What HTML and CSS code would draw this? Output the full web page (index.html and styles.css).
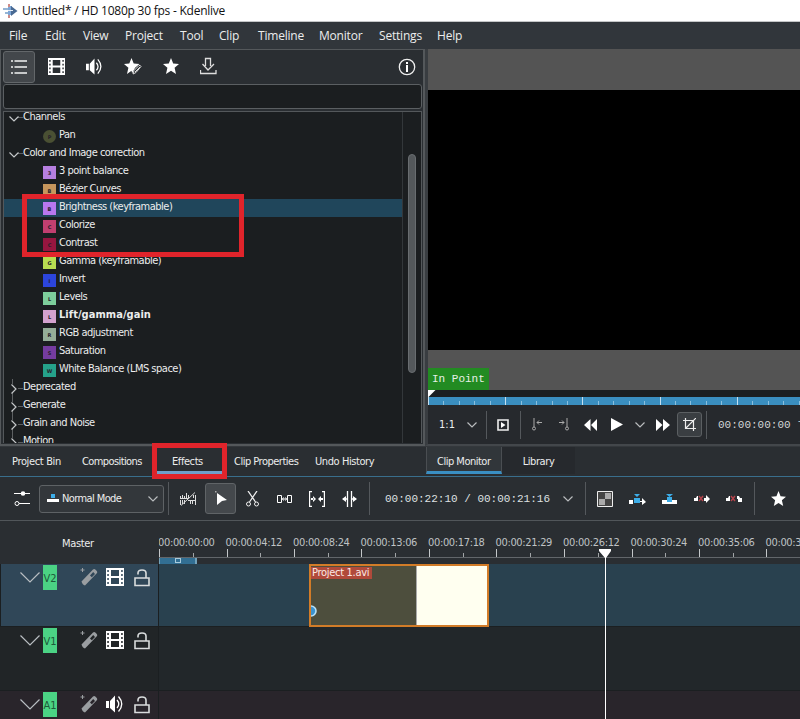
FILE: index.html
```html
<!DOCTYPE html>
<html lang="en">
<head>
<meta charset="utf-8">
<title>Untitled* / HD 1080p 30 fps - Kdenlive</title>
<link rel="stylesheet" href="styles.css">
</head>
<body>
<svg class="defs" width="0" height="0">
  <symbol id="film" viewBox="0 0 18 18"><path fill="currentColor" fill-rule="evenodd" d="M0 0H18V18H0zM5 2V8H13V2zM5 10V16H13V10zM1.300 2v2h1.500V2zM1.300 6v2h1.500V6zM1.300 10v2h1.500v-2zM1.300 14v2h1.500v-2zM15.200 2v2h1.500V2zM15.200 6v2h1.500V6zM15.200 10v2h1.500v-2zM15.200 14v2h1.500v-2z"/></symbol>
  <symbol id="sound" viewBox="0 0 18 18"><path fill="currentColor" d="M0 6h3v7H0zM4 6l5-5.500v17L4 13z"/><path fill="none" stroke="currentColor" stroke-width="1.300" d="M11 5q3.500 4 0 8M12.500 1.500q6.500 7.500 0 15"/></symbol>
  <symbol id="star" viewBox="0 0 16 16"><path fill="currentColor" d="M8 0l2.200 5.500 5.800.5-4.400 3.800L13 16l-5-3.200L3 16l1.400-6.200L0 6l5.800-.5z"/></symbol>
  <symbol id="chev" viewBox="0 0 10 6"><path fill="none" stroke="currentColor" stroke-width="1.200" d="M.5.5L5 5 9.500.5"/></symbol>
  <symbol id="right" viewBox="0 0 6 10"><path fill="none" stroke="currentColor" stroke-width="1.200" d="M.5.5L5 5 .5 9.500"/></symbol>
  <symbol id="wand" viewBox="0 0 18 18"><path fill="currentColor" fill-rule="evenodd" d="M1.500 13.500L13 1.500q1.200-1 2.300 0l1.500 1.500q1 1.200 0 2.300L5 17.500q-2.500-.5-3.500-4zM10 7.500l1.800 1.800 3.200-3.400-1.800-1.800z"/><path stroke="currentColor" d="M2.500 0v4M.5 2h4"/></symbol>
  <symbol id="lock" viewBox="0 0 16 18"><path fill="none" stroke="currentColor" stroke-width="1.600" d="M1 9h14v7.500H1zM4 5.500V4q0-3 4-3t4 3v5"/></symbol>
</svg>

<header class="titlebar">
  <svg width="15" height="14" viewBox="0 0 15 14"><path fill="#96b5d5" d="M0 4h5v2H0zM2 8h4v2H2z"/><path fill="#7da6d6" d="M5 2h4v9H5z"/><path fill="#496a93" d="M8 2l6.500 5L8 12z"/><path fill="#ce8b87" d="M5 0h2v3H5zM5 11h2v3H5z"/><path fill="#e6edf5" d="M5 6h5v1H5z"/></svg>
  <span>Untitled* / HD 1080p 30 fps - Kdenlive</span>
</header>
<nav class="menubar"><span>File</span><span>Edit</span><span>View</span><span>Project</span><span>Tool</span><span>Clip</span><span>Timeline</span><span>Monitor</span><span>Settings</span><span>Help</span></nav>

<main class="upper">
  <section class="effects">
    <div class="fxbar">
      <span class="fxbtn on"><svg width="18" height="16" viewBox="0 0 18 16"><path stroke="#f4f5f5" stroke-width="1.600" d="M4.500 2H17M4.500 8H17M4.500 14H17M1 2h2M1 8h2M1 14h2"/></svg></span>
      <span class="fxbtn"><svg width="17" height="17"><use href="#film"/></svg></span>
      <span class="fxbtn"><svg width="17" height="17"><use href="#sound"/></svg></span>
      <span class="fxbtn"><svg width="18" height="17" viewBox="0 0 18 17"><path fill="#fff" d="M7.500 0l2.200 5.500 5.800.5-4.400 3.800-3 5.500-.6-2.500L3 16l1.400-6.200L0 6l5.300-.5z"/><path fill="#2a2e32" stroke="#ddd" d="M9 16l1-3.500 5-5q1.500-.5 2 1l-5 6z"/><path stroke="#ddd" d="M11 14l5-5"/></svg></span>
      <span class="fxbtn"><svg width="16" height="16"><use href="#star"/></svg></span>
      <span class="fxbtn"><svg width="17" height="18" viewBox="0 0 17 18"><path fill="none" stroke="#ddd" stroke-width="1.300" d="M5.500 9V1.500h5V9M2.500 7L8 13l6-6M.5 13v3.500H16V13"/></svg></span>
      <span class="info"><svg width="18" height="18" viewBox="0 0 18 18"><circle cx="9" cy="9" r="7.700" fill="none" stroke="#eee" stroke-width="1.300"/><path fill="#fff" d="M8 4h2v2H8zM8 7h2v7H8z"/></svg></span>
    </div>
    <div class="search"></div>
    <div class="tree">
      <ul class="rows">
        <li class="group open"><svg width="10" height="6"><use href="#chev"/></svg><span>Channels</span></li>
        <li><i class="pan">P</i><span>Pan</span></li>
        <li class="group open"><svg width="10" height="6"><use href="#chev"/></svg><span>Color and Image correction</span></li>
        <li><i class="c1">3</i><span>3 point balance</span></li>
        <li><i class="c2">B</i><span>Bézier Curves</span></li>
        <li class="selected"><i class="c3">B</i><span>Brightness (keyframable)</span></li>
        <li><i class="c4">C</i><span>Colorize</span></li>
        <li><i class="c5">C</i><span>Contrast</span></li>
        <li><i class="c6">G</i><span>Gamma (keyframable)</span></li>
        <li><i class="c7">I</i><span>Invert</span></li>
        <li><i class="c8">L</i><span>Levels</span></li>
        <li><i class="c9">L</i><span class="strong">Lift/gamma/gain</span></li>
        <li><i class="c10">R</i><span>RGB adjustment</span></li>
        <li><i class="c11">S</i><span>Saturation</span></li>
        <li><i class="c12">W</i><span>White Balance (LMS space)</span></li>
        <li class="group"><svg width="6" height="10"><use href="#right"/></svg><span>Deprecated</span></li>
        <li class="group"><svg width="6" height="10"><use href="#right"/></svg><span>Generate</span></li>
        <li class="group"><svg width="6" height="10"><use href="#right"/></svg><span>Grain and Noise</span></li>
        <li class="group"><svg width="6" height="10"><use href="#right"/></svg><span>Motion</span></li>
      </ul>
      <div class="scroll"><div class="thumb"></div></div>
    </div>
  </section>

  <section class="monitor">
    <div class="screen"><div class="video"></div><div class="below"><span class="inpoint">In Point</span></div></div>
    <div class="seek"><svg width="8" height="8"><path fill="#fff" d="M0 0h7.500L0 7.500z"/></svg></div>
    <div class="mticks"></div>
    <div class="controls">
      <span class="ratio">1:1</span>
      <svg class="soft" width="10" height="6"><use href="#chev"/></svg>
      <b class="sep s1"></b>
      <svg class="k-box" width="12" height="12" viewBox="0 0 12 12"><path fill="none" stroke="#eee" stroke-width="1.600" d="M1 1h10v10H1z"/><path fill="#fff" d="M4 3l4.500 3L4 9z"/></svg>
      <b class="sep s2"></b>
      <svg class="k-in" width="11" height="13" viewBox="0 0 11 13"><path fill="none" stroke="#aaa" d="M2 0v9M10 4.500H5M7 2.500l-2 2 2 2"/><circle cx="2" cy="10.500" r="1.500" fill="none" stroke="#aaa"/></svg>
      <svg class="k-out" width="11" height="13" viewBox="0 0 11 13"><path fill="none" stroke="#aaa" d="M9 0v9M1 4.500h5M4 2.500l2 2-2 2"/><circle cx="9" cy="10.500" r="1.500" fill="none" stroke="#aaa"/></svg>
      <svg class="k-rew" width="13" height="12"><path fill="#fff" d="M6.500 0v12L0 6zM13 0v12L7 6z"/></svg>
      <svg class="k-play" width="12" height="13"><path fill="#fff" d="M0 0l12 6.500L0 13z"/></svg>
      <svg class="k-chev soft" width="10" height="6"><use href="#chev"/></svg>
      <svg class="k-fwd" width="14" height="12"><path fill="#fff" d="M0 0l6.500 6L0 12zM7 0l7 6-7 6z"/></svg>
      <span class="crop"><svg width="13" height="13" viewBox="0 0 13 13"><path fill="none" stroke="#eee" stroke-width="1.200" d="M2.500 0v10.500H13M0 2.500h10.500V13M3 10L13 0"/></svg></span>
      <b class="sep s3"></b>
      <span class="mtime">00:00:00:00</span><span class="mtime more">T</span>
    </div>
  </section>
</main>

<div class="tabs">
  <span class="t-bin">Project Bin</span><span class="t-comp">Compositions</span><span class="t-fx">Effects</span><span class="t-prop">Clip Properties</span><span class="t-undo">Undo History</span>
  <span class="t-mon">Clip Monitor</span><span class="t-lib">Library</span>
</div>

<div class="toolbar">
  <svg class="sliders" width="16" height="15" viewBox="0 0 16 15"><path stroke="#fff" stroke-width="1.200" d="M0 2.500h16M5 12.500h11"/><circle cx="9" cy="2.500" r="2.300" fill="#fff"/><circle cx="3" cy="12.500" r="2" fill="none" stroke="#fff"/></svg>
  <div class="mode"><svg width="12" height="9" viewBox="0 0 12 9"><path fill="#3daee9" d="M4 0h4v4H4z"/><path fill="#fff" d="M0 5h12v3H0z"/></svg><span>Normal Mode</span><svg class="soft" width="10" height="6"><use href="#chev"/></svg></div>
  <b class="sep tall"></b>
  <svg class="i-mix" width="16" height="14" viewBox="0 0 16 14"><path stroke="#ddd" fill="none" d="M.5 4v2M2.500 3v3M4.500 4v2M6.500 1v5M8.500 3v3M.5 8v5M2.500 8v4M4.500 8v4M10.500 8v4M12.500 8v4M15.500 3v10M13.500 3v3M0 6.500h8M8 8.500h8M1 13.500L15 .5"/></svg>
  <span class="pick"><svg width="12" height="15" viewBox="0 0 12 15"><path fill="#fff" d="M2 2l10 7-5 1-5 4z"/><path fill="#aaa" d="M0 0h1.500v1.500H0z"/></svg></span>
  <svg class="i-cut" width="13" height="16" viewBox="0 0 13 16"><path fill="none" stroke="#eee" stroke-width="1.300" d="M2 0l7.500 11M11 0L3.500 11"/><circle cx="2.500" cy="13" r="2" fill="none" stroke="#eee"/><circle cx="10.500" cy="13" r="2" fill="none" stroke="#eee"/></svg>
  <svg class="i-space" width="15" height="8" viewBox="0 0 15 8"><path fill="none" stroke="#fff" d="M.5.500h4v7h-4zM10.500.500h4v7h-4zM5.500 4h4M6.500 2.500L5.500 4l1 1.500M8.500 2.500l1 1.500-1 1.500"/></svg>
  <svg class="i-fit" width="16" height="16" viewBox="0 0 16 16"><path fill="none" stroke="#fff" stroke-width="1.200" d="M3 .6H.6v14.800H3M13 .6h2.400v14.800H13M3 8h3M10 8h3"/><path fill="#fff" d="M7 8L4 5v6zM9 8l3-3v6zM2 7h3v2H2zM11 7h3v2h-3z"/></svg>
  <svg class="i-slip" width="15" height="16" viewBox="0 0 15 16"><path fill="none" stroke="#fff" stroke-width="1.300" d="M5.500 0v16M9.500 0v16M1 8h4M10 8h4"/><path fill="#fff" d="M0 8l4-3v6zM15 8l-4-3v6z"/></svg>
  <b class="sep tall"></b>
  <span class="tcode">00:00:22:10 / 00:00:21:16</span>
  <svg class="soft i-tc" width="10" height="6"><use href="#chev"/></svg>
  <b class="sep tall"></b>
  <svg class="i-comp" width="16" height="16" viewBox="0 0 16 16"><path fill="#444" stroke="#eee" d="M.5.500h15v15H.5z"/><path fill="#aaa" d="M8 2h6v6H8zM2 8h6v6H2z"/></svg>
  <svg class="i-a" width="17" height="12" viewBox="0 0 17 12"><path fill="#fff" d="M0 7h4v4H0zM11 8h2V5l4 4-4 3V9h-2z"/><path fill="#3daee9" d="M5 5h6v5H5zM5 1l3 3 3-3z"/></svg>
  <svg class="i-b" width="15" height="12" viewBox="0 0 15 12"><path fill="#fff" d="M0 7h15v4H0z"/><path fill="#3daee9" d="M5 4h5v5H5zM4 1h7L7.500 4z"/></svg>
  <svg class="i-c" width="16" height="8" viewBox="0 0 16 8"><path fill="#fff" d="M0 3h2l1-2h1v5H0zM10 3h2V0l4 4-4 4V6h-2z"/><path stroke="#b5434b" stroke-width="1.400" d="M5 1l4 5M9 1L5 6"/></svg>
  <svg class="i-d" width="16" height="8" viewBox="0 0 16 8"><path fill="#fff" d="M0 3h2l1-2h1v5H0zM11 1h2l1 2h2v4h-4V4h-1z"/><path stroke="#b5434b" stroke-width="1.400" d="M5 1l4 5M9 1L5 6"/></svg>
  <b class="sep tall"></b>
  <svg class="i-e" width="15" height="15"><use href="#star"/></svg>
</div>

<section class="timeline">
  <div class="rulerrow">
    <div class="master">Master</div>
    <div class="ruler">
      <div class="labels"><span>00:00:00:00</span><span>00:00:04:12</span><span>00:00:08:24</span><span>00:00:13:06</span><span>00:00:17:18</span><span>00:00:21:29</span><span>00:00:26:12</span><span>00:00:30:24</span><span>00:00:35:06</span><span>00:00:39:18</span></div>
      <div class="ticks"></div>
      <div class="zonebar"><div class="zone"><i></i></div></div>
    </div>
  </div>
  <div class="track v2">
    <div class="head"><svg class="fold" width="20" height="11" viewBox="0 0 20 11"><path fill="none" stroke="currentColor" stroke-width="1.200" d="M.5.5L10 10 19.500.5"/></svg><span class="tag">V2</span><svg class="wand" width="18" height="18"><use href="#wand"/></svg><svg class="kind" width="18" height="18"><use href="#film"/></svg><svg class="lock" width="16" height="18"><use href="#lock"/></svg></div>
    <div class="lane"><div class="clip"><span class="name">Project 1.avi</span><div class="bright"></div><svg class="key" width="7" height="12"><circle cx="0" cy="6" r="5" fill="#3b93cf" stroke="#b9e0f6" stroke-width="1.600"/></svg></div></div>
  </div>
  <div class="track v1">
    <div class="head"><svg class="fold" width="20" height="11" viewBox="0 0 20 11"><path fill="none" stroke="currentColor" stroke-width="1.200" d="M.5.5L10 10 19.500.5"/></svg><span class="tag">V1</span><svg class="wand" width="18" height="18"><use href="#wand"/></svg><svg class="kind" width="18" height="18"><use href="#film"/></svg><svg class="lock" width="16" height="18"><use href="#lock"/></svg></div>
    <div class="lane"></div>
  </div>
  <div class="track a1">
    <div class="head"><svg class="fold" width="20" height="11" viewBox="0 0 20 11"><path fill="none" stroke="currentColor" stroke-width="1.200" d="M.5.5L10 10 19.500.5"/></svg><span class="tag">A1</span><svg class="wand" width="18" height="18"><use href="#wand"/></svg><svg class="kind" width="18" height="18"><use href="#sound"/></svg><svg class="lock" width="16" height="18"><use href="#lock"/></svg></div>
    <div class="lane"></div>
  </div>
  <svg class="playhead" width="14" height="172"><path fill="#fff" d="M1 0h12v2L8 9v163H7V9L1 2z"/></svg>
</section>
<div class="mark mark-list"></div>
<div class="mark mark-tab"></div>
</body>
</html>
```
FILE: styles.css
```css
* { box-sizing: border-box; }
body {
  margin: 0; width: 800px; height: 719px; overflow: hidden; position: relative;
  display: flex; flex-direction: column;
  background: #2a2e32; color: #eceded;
  font: 11px/16px "DejaVu Sans Condensed", "DejaVu Sans", sans-serif;
  font-stretch: condensed; letter-spacing: -0.42px;
}
svg { display: block; flex: none; }
.defs { position: absolute; }
span, b, i { flex: none; white-space: nowrap; }
i { font-style: normal; }
.soft { color: #b9bcbe; }
.sep { width: 1px; background: #54585c; }

.titlebar {
  height: 22px; flex: none; display: flex; align-items: center; gap: 4px; padding-left: 3px;
  background: #fff; color: #111; border-bottom: 1px solid #c4c6c7;
  font: 12px/20px "Open Sans", sans-serif; letter-spacing: -0.02px; word-spacing: -0.5px;
  letter-spacing: -0.65px; letter-spacing: -0.6px;
}
.titlebar { letter-spacing: -0.28px; word-spacing: 0; }
.titlebar span { letter-spacing: -0.02em; margin-top: 1px; }
.menubar {
  height: 27px; flex: none; display: grid; padding-left: 9px;
  grid-template-columns: 36px 38px 42px 55px 39px 39px 61px 60px 58px 60px;
  background: #31363b; font: 12px/27px "Open Sans", sans-serif; letter-spacing: -0.2px;
}

.upper { height: 397px; flex: none; display: flex; }
.effects {
  width: 425px; border: solid #54585b; border-width: 1px 2px 2px 1px; padding: 0 1px 0 2px;
  display: flex; flex-direction: column;
}
.fxbar { height: 34px; display: flex; gap: 6px; align-items: center; color: #fff; flex: none; }
.fxbtn { width: 32px; height: 32px; display: grid; place-items: center; padding: 0 1px 2px 0; }
.fxbtn.on { background: #43474b; border: 1px solid #63676a; border-radius: 3px; padding: 0; }
.info { margin-left: 167px; padding-bottom: 1px; }
.search { height: 25px; flex: none; background: #1b1e20; border: 1px solid #5b5f62; border-radius: 3px; }
.tree {
  flex: 1; min-height: 0; overflow: hidden; display: flex; margin: 2px 0 1px;
  background: #1b1e20; border: 1px solid #54585b; border-bottom: 0;
}
.rows { width: 398px; margin: -3px 0 0; padding: 0; list-style: none; flex: none; }
.rows li { height: 18px; padding-left: 39px; display: flex; align-items: center; letter-spacing: -0.5px; }
.rows li > span { line-height: 14px; padding-bottom: 2px; }
.rows i {
  width: 13px; height: 13px; margin-right: 3px; color: #25202a;
  font: bold 5px/14px "DejaVu Sans", sans-serif; text-align: center; letter-spacing: 0;
}
.rows .strong { font-weight: bold; letter-spacing: 0.05px; }
.rows .group {
  padding-left: 5px;
  background: linear-gradient(#5d6062, #5d6062) 14px 9px / 5px 1px no-repeat, linear-gradient(#5d6062, #5d6062) 8px 0 / 1px 5px no-repeat, linear-gradient(#5d6062, #5d6062) 8px 14px / 1px 4px no-repeat;
}
.rows .open { background: linear-gradient(#5d6062, #5d6062) 14px 8px / 5px 1px no-repeat; }
.group svg { color: #c5c8ca; margin: 2px 6px 0 2px; width: 6px; }
.group.open svg { width: 10px; margin: 2px 4px 0 0; }
.rows .selected { background: #20465b; }
.rows .pan { background: #4a5033; border-radius: 50%; }
.c1 { background: #b67fe0; } .c2 { background: #c6965c; } .c3 { background: #b877ee; }
.c4 { background: #c13f70; } .c5 { background: #961640; } .c6 { background: #b8dd51; }
.c7 { background: #2c45dc; } .c8 { background: #7dce9b; } .c9 { background: #d3a2cf; }
.c10 { background: #95ae99; } .c11 { background: #753ca0; } .c12 { background: #25a28a; }
.scroll { flex: 1; border-left: 1px solid #33373a; padding: 42px 0 0 5px; }
.thumb { width: 8px; height: 219px; border-radius: 4px; background: #54585b; border: 1px solid #696d70; }

.monitor {
  width: 375px; flex: none; display: flex; flex-direction: column;
  border-left: 3px solid #393d41; border-bottom: 2px solid #43474b;
}
.screen { height: 341px; background: #545454; padding-top: 41px; flex: none; }
.video { height: 260px; background: #000; }
.below { height: 40px; padding-top: 18px; }
.inpoint {
  display: block; width: 61px; height: 22px; padding-left: 4px; background: #228b22; color: #e6f0e6;
  font: 11px/23px "Liberation Mono", monospace; letter-spacing: 0;
}
.seek { height: 7px; flex: none; background: #1b1e20; }
.mticks {
  height: 8px; flex: none;
  background:
    repeating-linear-gradient(90deg, #c5dfef 0 1px, transparent 1px 77.2px),
    repeating-linear-gradient(90deg, #8bbfdd 0 1px, transparent 1px 15.44px) 0 4px / 100% 4px no-repeat,
    #3a8ebf;
}
.controls { height: 39px; display: flex; align-items: center; padding-left: 11px; background: #26292d; }
.ratio { width: 19px; margin-right: 9px; letter-spacing: 0; }
.controls .sep { height: 28px; }
.s1 { margin-left: 9px; } .k-box { margin-left: 10px; } .s2 { margin-left: 11px; }
.k-in { margin-left: 11px; } .k-out { margin-left: 15px; } .k-rew { margin-left: 15px; }
.k-play { margin-left: 14px; } .k-chev { margin-left: 12px; } .k-fwd { margin-left: 11px; }
.crop { width: 25px; height: 25px; margin-left: 7px; display: grid; place-items: center; background: #3a3e42; border: 1px solid #5b5f62; border-radius: 3px; }
.s3 { margin-left: 4px; }
.mtime { margin-left: 11px; width: 73px; font: 11px/18px "Liberation Mono", monospace; letter-spacing: 0; color: #d3d5d6; }
.more { width: auto; margin-left: 7px; }

.tabs {
  height: 31px; flex: none; display: flex; border-bottom: 1px solid #396e8c; padding-bottom: 2px;
  line-height: 30px; border-top: 1px solid #34383c;
}
.t-bin { width: 70px; padding-left: 12px; letter-spacing: -0.35px; }
.t-comp { width: 86px; padding-left: 12px; letter-spacing: -0.6px; }
.t-fx { width: 66px; padding-left: 16px; border-bottom: 3px solid #6f9fcc; }
.t-prop { width: 93px; padding-left: 12px; letter-spacing: -0.5px; }
.t-undo { width: 111px; }
.t-mon { width: 76px; padding-left: 10px; letter-spacing: -0.5px; background: #31363a; border: solid #4a4e52; border-width: 0 1px 0 1px; border-bottom: 3px solid #3a8fc3; }
.t-lib { width: 73px; text-align: center; background: #26292d; }

.toolbar { height: 44px; flex: none; display: flex; align-items: center; padding-left: 14px; border-bottom: 1px solid #51565a; }
.mode { width: 125px; height: 28px; margin: 0 5px 0 9px; padding: 0 5px 0 7px; display: flex; align-items: center; gap: 3px; border: 1px solid #5e6265; border-radius: 3px; background: #33373b; letter-spacing: -0.6px; }
.mode .soft { margin-left: auto; }
.toolbar .tall { height: 33px; }
.toolbar .mode + .tall { margin-left: -1px; }
.i-mix { margin-left: 11px; }
.pick { width: 31px; height: 31px; margin-left: 9px; display: grid; place-items: center; background: #44484c; border: 1px solid #606467; border-radius: 3px; }
.i-cut { margin-left: 10px; } .i-space { margin-left: 18px; } .i-fit { margin-left: 17px; }
.i-slip { margin: 0 12px 0 17px; }
.tcode { width: 167px; margin-left: 15px; font: 11px/16px "Liberation Mono", monospace; letter-spacing: 0; color: #dfe1e2; }
.i-tc { margin: 0 12px 0 11px; }
.i-comp { margin-left: 11px; } .i-a { margin-left: 16px; } .i-b { margin-left: 16px; }
.i-c { margin-left: 17px; } .i-d { margin: 0 12px 0 16px; } .i-e { margin-left: 16px; color: #fff; }

.timeline { flex: 1; position: relative; display: flex; flex-direction: column; background: #1b1f21; }
.rulerrow { height: 43px; flex: none; display: flex; background: #2a2e32; }
.master { width: 159px; flex: none; padding-left: 62px; line-height: 45px; letter-spacing: -0.35px; }
.ruler { flex: 1; overflow: hidden; padding-top: 14px; }
.labels { height: 14px; display: grid; grid-template-columns: repeat(10, 67.5px); margin-left: -1px; color: #bfc2c4; line-height: 16px; letter-spacing: -0.35px; }
.ticks {
  height: 8px;
  background:
    repeating-linear-gradient(90deg, #c4c7c9 0 1px, transparent 1px 67.5px),
    repeating-linear-gradient(90deg, #a2a5a7 0 1px, transparent 1px 33.75px) 0 4px / 100% 4px no-repeat;
}
.zonebar { height: 7px; border-top: 1px solid #62666a; }
.zone { width: 38px; height: 6px; background: #326f93; border: solid #73a2ba; border-width: 0 2px 0 1px; display: flex; justify-content: center; }
.zone i { width: 6px; height: 5px; border: 1px solid #a9cbdc; }
.track { height: 63px; flex: none; display: flex; padding-bottom: 1px; position: relative; }
.head { width: 158px; margin-right: 1px; flex: none; display: flex; align-items: flex-start; padding: 1px 0 0 20px; background: #212527; color: #fff; }
.lane { flex: 1; background: #22272a; }
.v2 .head { background: #304758; margin-left: 1px; width: 157px; padding-left: 19px; }
.v2 .lane { background: #29414f; }
.a1 .head, .a1 .lane { background: #29252b; }
.v1 { height: 64px; }
.fold { margin-top: 7px; color: #b9bec2; }
.tag { width: 14px; height: 25px; margin-left: 3px; background: #4bd384; color: #1d5b3a; text-align: center; line-height: 27px; letter-spacing: 0; }
.wand { margin: 3px 0 0 23px; color: #9a9ea1; }
.kind { margin: 3px 0 0 8px; }
.lock { margin: 4px 0 0 10px; color: #d9dcdd; }
.clip { width: 180px; height: 63px; margin-left: 150px; position: relative; border: 2px solid #d27c28; background: #4d4e3d; display: flex; justify-content: space-between; align-items: flex-start; }
.name { background: #b04a3b; color: #fce9e4; line-height: 12px; width: 61px; padding-left: 1px; margin-top: 1px; letter-spacing: -0.3px; }
.bright { width: 71px; height: 59px; background: #fffff0; border-left: 1px solid #aaa; }
.key { position: absolute; left: 0; top: 39px; }
.playhead { position: absolute; left: 598px; top: 28px; }

.mark { position: absolute; border: 5px solid #e0242b; }
.mark-list { left: 22px; top: 194px; width: 222px; height: 63px; }
.mark-tab { left: 152px; top: 443px; width: 75px; height: 36px; }
```
